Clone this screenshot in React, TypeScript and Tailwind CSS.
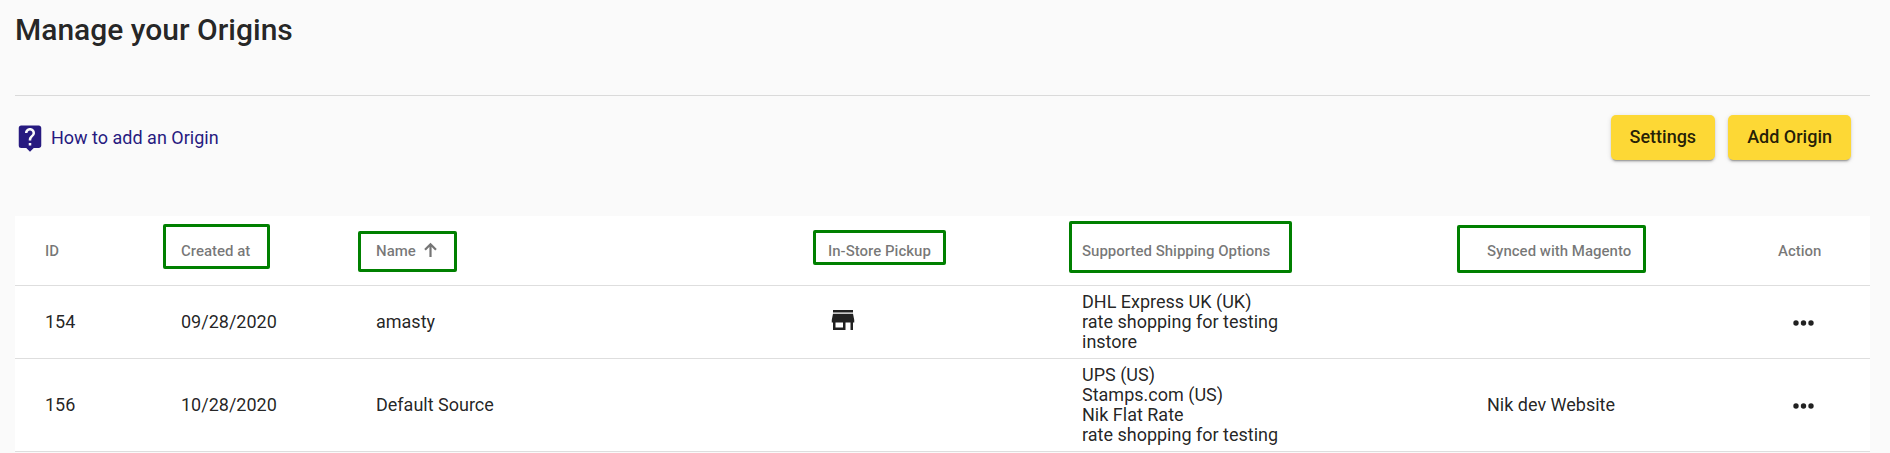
import { MdLiveHelp, MdStore } from 'react-icons/md';

interface Column {
  key: string;
  label: string;
  width: string;
  // frame drawn over the header cell
  frame?: string;
  sorted?: boolean;
}

interface Origin {
  id: number;
  createdAt: string;
  name: string;
  inStore: boolean;
  shipping: string[];
  website: string;
}

const columns: Column[] = [
  { key: 'id', label: 'ID', width: 'w-[136px]' },
  { key: 'created', label: 'Created at', width: 'w-[195px]', frame: 'left-3 top-2 h-[45px] w-[107px]' },
  { key: 'name', label: 'Name', width: 'w-[452px]', frame: 'left-3 top-[15px] h-[41px] w-[99px]', sorted: true },
  { key: 'pickup', label: 'In-Store Pickup', width: 'w-[254px]', frame: 'left-[15px] top-3.5 h-[35px] w-[133px]' },
  { key: 'shipping', label: 'Supported Shipping Options', width: 'w-[405px]', frame: 'left-[17px] top-[5px] h-[52px] w-[223px]' },
  { key: 'website', label: 'Synced with Magento', width: 'w-[291px]', frame: 'left-0 top-[9px] h-12 w-[189px]' },
  { key: 'action', label: 'Action', width: 'w-[122px]' },
];

const origins: Origin[] = [
  {
    id: 154,
    createdAt: '09/28/2020',
    name: 'amasty',
    inStore: true,
    shipping: ['DHL Express UK (UK)', 'rate shopping for testing', 'instore'],
    website: '',
  },
  {
    id: 156,
    createdAt: '10/28/2020',
    name: 'Default Source',
    inStore: false,
    shipping: ['UPS (US)', 'Stamps.com (US)', 'Nik Flat Rate', 'rate shopping for testing'],
    website: 'Nik dev Website',
  },
];

const cell = 'border-b border-[#dedede] py-1.5 pl-[30px]';

function SortArrow() {
  return (
    <svg viewBox="0 0 13 15" className="mb-0.5 h-[15px] w-[13px]" fill="none" stroke="currentColor" strokeWidth="2.2">
      <path d="M6.5 15V2.2M1 7.8l5.5-5.6L12 7.8" />
    </svg>
  );
}

function YellowButton({ label }: { label: string }) {
  return (
    <button
      type="button"
      className="h-[45px] rounded-[5px] bg-[#fdd835] px-[19px] pb-0.5 text-lg font-medium text-black/87 shadow-[0_3px_1px_-2px_rgba(0,0,0,0.2),0_2px_2px_0_rgba(0,0,0,0.14),0_1px_5px_0_rgba(0,0,0,0.12)]"
    >
      {label}
    </button>
  );
}

function HeaderCell({ column }: { column: Column }) {
  return (
    <th
      scope="col"
      className="relative h-[70px] border-b border-[#dedede] p-0 pl-[30px] text-left text-[15px] font-medium text-black/54"
    >
      {column.frame && (
        <span className={['pointer-events-none absolute rounded-xs border-3 border-[#008000]', column.frame].join(' ')} />
      )}
      {column.sorted ? (
        <button type="button" className="flex items-center gap-2 font-medium">
          {column.label}
          <SortArrow />
        </button>
      ) : (
        column.label
      )}
    </th>
  );
}

function OriginRow({ origin }: { origin: Origin }) {
  return (
    <tr>
      <td className={cell}>{origin.id}</td>
      <td className={cell}>{origin.createdAt}</td>
      <td className={cell}>{origin.name}</td>
      <td className={cell}>
        {origin.inStore && <MdStore className="mb-1 h-[30px] w-[30px]" aria-label="In-store pickup available" />}
      </td>
      <td className={cell}>
        {origin.shipping.map((option) => (
          <div key={option}>{option}</div>
        ))}
      </td>
      <td className={cell}>{origin.website}</td>
      <td className="border-b border-[#dedede] py-1.5 pl-[45px]">
        <button type="button" aria-label={`Actions for ${origin.name}`} className="flex h-5 items-center pt-0.5">
          <svg viewBox="0 0 21 6" className="h-1.5 w-[21px]" fill="currentColor">
            <circle cx="3" cy="3" r="2.7" />
            <circle cx="10.5" cy="3" r="2.7" />
            <circle cx="18" cy="3" r="2.7" />
          </svg>
        </button>
      </td>
    </tr>
  );
}

export default function App() {
  return (
    <div className="min-h-screen bg-[#fafafa] pr-5 pl-[15px] font-[Roboto,sans-serif] text-black/87">
      <h1 className="pt-3 text-[30px] leading-9 font-medium">Manage your Origins</h1>
      <hr className="mt-[47px] border-[#dadada]" />

      <div className="mt-[19px] flex h-[45px] items-center justify-between pr-[19px]">
        <a href="#how-to" className="flex items-center gap-1.5 text-lg leading-6 text-[#271a80]">
          <MdLiveHelp className="h-[30px] w-[30px]" />
          <span>How to add an Origin</span>
        </a>
        <div className="flex gap-[13px]">
          <YellowButton label="Settings" />
          <YellowButton label="Add Origin" />
        </div>
      </div>

      <table className="mt-14 w-full table-fixed border-separate border-spacing-0 bg-white text-lg leading-5">
        <colgroup>
          {columns.map((column) => (
            <col key={column.key} className={column.width} />
          ))}
        </colgroup>
        <thead>
          <tr>
            {columns.map((column) => (
              <HeaderCell key={column.key} column={column} />
            ))}
          </tr>
        </thead>
        <tbody>
          {origins.map((origin) => (
            <OriginRow key={origin.id} origin={origin} />
          ))}
        </tbody>
      </table>
    </div>
  );
}
